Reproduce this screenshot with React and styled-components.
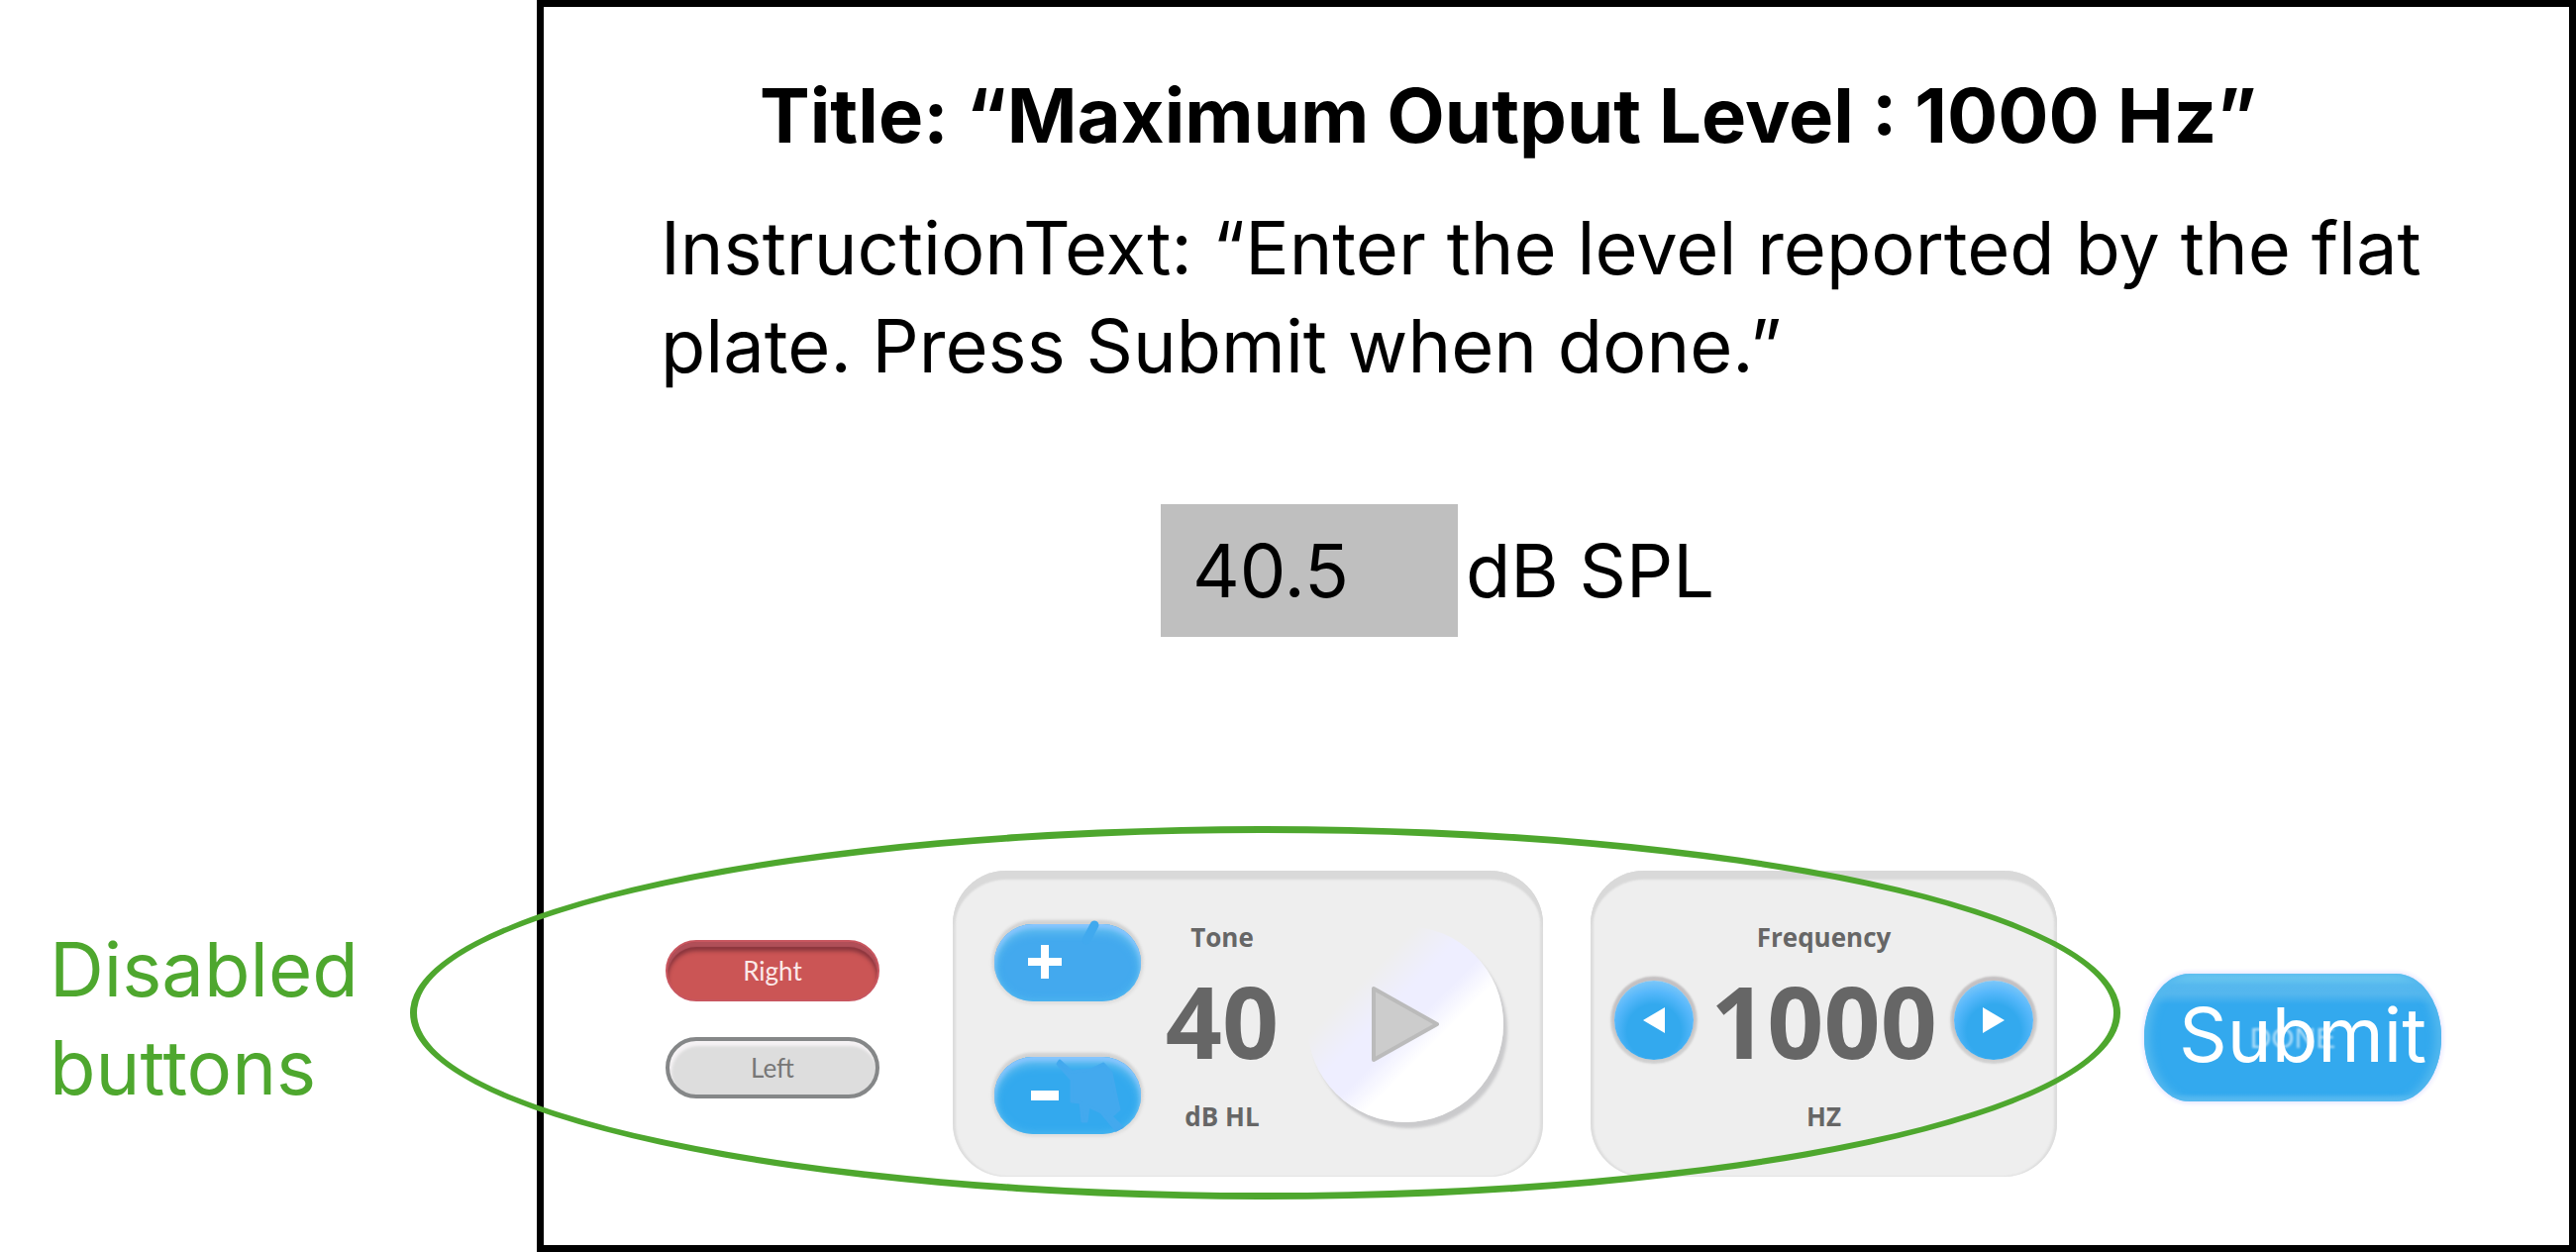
import React from "react";
import styled, { createGlobalStyle } from "styled-components";

const GlobalStyle = createGlobalStyle`
  *, *::before, *::after { box-sizing: border-box; }
  body { margin: 0; background: #fff; color: #000; font-family: Inter, "Liberation Sans", sans-serif; }
  button, input, fieldset { font-family: inherit; margin: 0; padding: 0; border: 0; }
`;

const green = "#4ea72e";
const ink = "#666";

const Page = styled.div`
  display: grid;
  grid-template-columns: 542px minmax(0, 1fr);
  min-height: 100vh;
`;

const Aside = styled.aside`
  display: flex;
  flex-direction: column;
  justify-content: flex-end;
  padding: 0 50px 137px;
`;

const Note = styled.p`
  margin: 0;
  color: ${green};
  font-size: 76px;
  line-height: 99px;
`;

const Screen = styled.main`
  display: flex;
  flex-direction: column;
  padding: 60px 100px 69px 118px;
  border: 7px solid #000;
`;

const Title = styled.h1`
  margin: 0;
  padding-left: 100px;
  font-size: 76px;
  font-weight: 700;
  line-height: 99px;
`;

const Instruction = styled.p`
  margin: 35px 0 0;
  font-size: 74px;
  line-height: 99px;
`;

const Reading = styled.div`
  display: flex;
  align-items: center;
  gap: 8px;
  margin: 110px 0 0 505px;
  font-size: 74px;
  line-height: 99px;
`;

const LevelInput = styled.input`
  width: 300px;
  height: 134px;
  padding: 0 32px;
  border-radius: 0;
  background: #bfbfbf;
  color: #000;
  font-size: 74px;
`;

const Controls = styled.div`
  display: flex;
  align-items: flex-start;
  margin-top: auto;
  padding-left: 5px;
`;

const DisabledGroup = styled.fieldset`
  position: relative;
  display: flex;
  align-items: flex-start;
  gap: 48px;
  min-width: 0;
`;

const Ellipse = styled.span`
  position: absolute;
  inset: -45px -64px -23px -258px;
  border: 7px solid ${green};
  border-radius: 50%;
  pointer-events: none;
`;

const Ears = styled.div`
  display: flex;
  flex-direction: column;
  gap: 36px;
  padding: 70px 26px 0 0;
`;

const EarButton = styled.button`
  width: 216px;
  height: 62px;
  border-radius: 31px;
  font: 400 26px Lato, sans-serif;
  ${({ $selected }) => $selected
    ? `background: #cb5555; color: #fbe9e9; border: 2px solid #c8565f;
       box-shadow: inset 0 5px 1px #b04f58, inset 0 9px 4px #87343c;`
    : `background: #ddd; color: #777; border: 4px solid #858788;
       box-shadow: inset 2px 5px 3px #f5f2f4;`}
`;

const Panel = styled.section`
  display: flex;
  align-items: center;
  height: 309px;
  padding: 0 34px 0 42px;
  border-radius: 54px;
  background: #eee;
  box-shadow: inset 0 9px 2px #d9d9d9, inset 3px 0 2px #dedede, inset -3px 0 2px #dedede;
`;

const StackPanel = styled(Panel)`
  width: 471px;
  padding: 0 21px;
`;

const Readout = styled.div`
  display: flex;
  flex: 1;
  flex-direction: column;
  align-items: center;
  padding: 6px 0 0;
  color: ${ink};
  font-family: "Open Sans", "Noto Sans", sans-serif;
  font-weight: 700;
`;

const Caption = styled.span`
  font-size: 26px;
  line-height: 34px;
`;

const Value = styled.output`
  font-size: 100px;
  line-height: 100px;
`;

const ValueRow = styled.div`
  display: flex;
  align-items: center;
  align-self: stretch;
  justify-content: ${({ $centered }) => ($centered ? "center" : "space-between")};
  margin: 17px 0 30px;
`;

const Steps = styled.div`
  display: flex;
  flex-direction: column;
  gap: 56px;
  padding-top: 11px;
`;

const StepButton = styled.button`
  width: 148px;
  height: 78px;
  border-radius: 39px;
  background: ${({ $tone }) => $tone};
  box-shadow: inset 0 4px 4px #8ac6ff, inset 0 9px 8px #62bdf0, inset 0 0 8px #55bdf0,
    0 -3px 3px 1px #d2d2d2, 0 0 3px 3px #dfdfdf;
  svg { display: block; }
`;

const PlayButton = styled.button`
  display: grid;
  place-items: center;
  width: 198px;
  height: 198px;
  margin: 0 6px;
  border-radius: 50%;
  background: linear-gradient(135deg, #eee 28%, #eeeeff 42%, #eeeeff 52%, #fff 62%);
  box-shadow: 4px 6px 3px #cacacc;
`;

const Tone = styled.div`
  width: 160px;
  display: flex;
  margin-left: 2px;
`;

const RoundButton = styled.button`
  display: grid;
  place-items: center;
  width: 80px;
  height: 80px;
  margin: 0 3px;
  border-radius: 50%;
  background: radial-gradient(circle at 50% 64%, #33a9ee 42%, #57b8fb 62%, #7fc8f8 80%, #9ed0ee);
  box-shadow: 0 -2px 2px 2px #c4c0c2, 0 0 2px 4px #d0d0d0;
`;

const Submit = styled.button`
  position: relative;
  width: 300px;
  height: 129px;
  margin: 104px 0 0 88px;
  padding: 0 0 6px 20px;
  border-radius: 46px / 64px;
  background: linear-gradient(#78d0f0, #56b8ee 9%, #54b6ee 16%, #33a9ee 24%, #33a9ee 94%, #66c0f2);
  box-shadow: inset 6px 0 8px #54b8ee, inset -6px 0 8px #54b8ee, 0 0 4px 2px #e9e8ff;
  color: #fff;
  font-size: 76px;
  line-height: 99px;
  white-space: nowrap;
`;

const GhostLabel = styled.span`
  position: absolute;
  inset: 0;
  display: grid;
  place-items: center;
  color: rgba(255, 255, 255, 0.6);
  font: 400 30px "Liberation Sans", sans-serif;
  filter: blur(1px);
`;

const Label = styled.span`
  position: relative;
`;

function Plus() {
  return (
    <svg width="148" height="78" viewBox="0 0 148 78" overflow="visible" aria-hidden="true">
      <path d="M101 1 93 16" stroke="#41a9ee" strokeWidth="9" strokeLinecap="round" />
      <path d="M34 38H68M51 21V55" stroke="#fff" strokeWidth="8" />
    </svg>
  );
}

function Minus() {
  return (
    <svg width="148" height="78" viewBox="0 0 148 78" aria-hidden="true">
      <path
        d="M66 4 78 15 98 13 110 7 118 16 123 40 126 53 118 60 129 71 123 74 108 56 95 50 93 65 89 65 87 46 78 45 78 23 64 7Z"
        fill="#43a9ee" stroke="#43a9ee" strokeWidth="3" strokeLinejoin="round"
      />
      <path d="M37 39H65" stroke="#fff" strokeWidth="10" />
    </svg>
  );
}

function Arrow({ left }) {
  return (
    <svg width="22" height="26" viewBox="0 0 22 26" aria-hidden="true">
      <path d={left ? "M22 0V26L0 13Z" : "M0 0V26L22 13Z"} fill="#fff" />
    </svg>
  );
}

export default function App() {
  return (
    <>
      <GlobalStyle />
      <Page>
        <Aside>
          <Note>Disabled buttons</Note>
        </Aside>
        <Screen>
          <Title>Title: “Maximum Output Level : 1000 Hz”</Title>
          <Instruction>
            InstructionText: “Enter the level reported by the flat plate. Press Submit when done.”
          </Instruction>
          <Reading>
            <LevelInput id="level" inputMode="decimal" defaultValue="40.5" />
            <label htmlFor="level">dB SPL</label>
          </Reading>
          <Controls>
            <DisabledGroup disabled>
              <Ears>
                <EarButton $selected>Right</EarButton>
                <EarButton>Left</EarButton>
              </Ears>
              <Panel>
                <Steps>
                  <StepButton $tone="#43a9ee" aria-label="Increase level"><Plus /></StepButton>
                  <StepButton $tone="#33a9ee" aria-label="Decrease level"><Minus /></StepButton>
                </Steps>
                <Tone>
                  <Readout>
                    <Caption>Tone</Caption>
                    <ValueRow $centered><Value>40</Value></ValueRow>
                    <Caption>dB HL</Caption>
                  </Readout>
                </Tone>
                <PlayButton aria-label="Play tone">
                  <svg width="72" height="82" viewBox="0 0 72 82" aria-hidden="true">
                    <path d="M4 5V77L68 41Z" fill="#ccc" stroke="#bbb" strokeWidth="4" strokeLinejoin="round" />
                  </svg>
                </PlayButton>
              </Panel>
              <StackPanel>
                <Readout>
                  <Caption>Frequency</Caption>
                  <ValueRow>
                    <RoundButton aria-label="Lower frequency"><Arrow left /></RoundButton>
                    <Value>1000</Value>
                    <RoundButton aria-label="Higher frequency"><Arrow /></RoundButton>
                  </ValueRow>
                  <Caption>HZ</Caption>
                </Readout>
              </StackPanel>
              <Ellipse />
            </DisabledGroup>
            <Submit type="submit">
              <GhostLabel aria-hidden="true">DONE</GhostLabel>
              <Label>Submit</Label>
            </Submit>
          </Controls>
        </Screen>
      </Page>
    </>
  );
}
